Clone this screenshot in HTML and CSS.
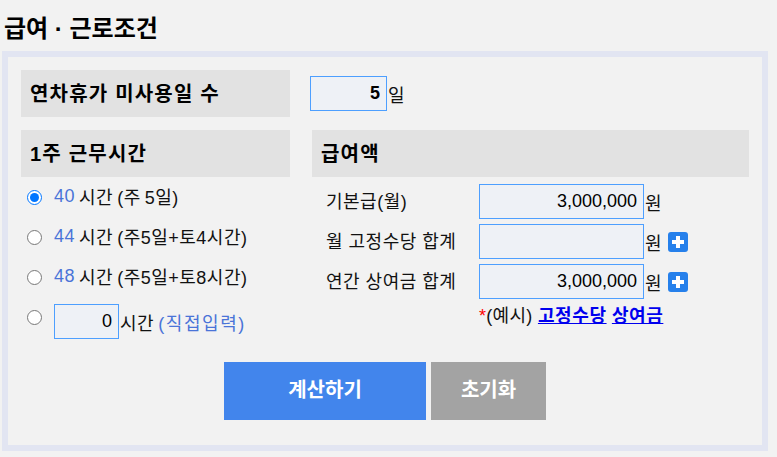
FILE: index.html
```html
<!DOCTYPE html>
<html lang="ko">
  <head>
    <meta charset="UTF-8" />
    <title>급여 · 근로조건</title>
    <link rel="stylesheet" href="styles.css">
  </head>
  <body>
    <h2 class="title">급여 · 근로조건</h2>
    <div class="panel">
      <div class="top-row">
        <div class="head">연차휴가 미사용일 수</div>
        <div class="days">
          <input class="num bold days-input" type="text" value="5" />
          <span class="unit">일</span>
        </div>
      </div>

      <div class="columns">
        <div class="col-left">
          <div class="head">1주 근무시간</div>
          <label class="hours"><input type="radio" name="hours" checked /><span class="label"><span class="blue">40</span> 시간 (주 5일)</span></label>
          <label class="hours"><input type="radio" name="hours" /><span class="label"><span class="blue">44</span> 시간 (주5일+토4시간)</span></label>
          <label class="hours"><input type="radio" name="hours" /><span class="label"><span class="blue">48</span> 시간 (주5일+토8시간)</span></label>
          <label class="hours custom"><input type="radio" name="hours" /><span class="label"><input class="num hours-input" type="text" value="0" /><span class="unit">시간 <span class="blue spaced">(직접입력)</span></span></span></label>
        </div>

        <div class="col-right">
          <div class="head">급여액</div>
          <div class="pay-list">
            <div class="pay-row">
              <span class="pay-name">기본급(월)</span>
              <input class="num pay-input" type="text" value="3,000,000" />
              <span class="unit">원</span>
            </div>
            <div class="pay-row">
              <span class="pay-name">월 고정수당 합계</span>
              <input class="num pay-input" type="text" value="" />
              <span class="unit">원</span>
              <svg class="plus" viewBox="0 0 20 20"><rect width="20" height="20" rx="3" fill="#2680eb" /><path d="M8 4h4v4h4v4h-4v4H8v-4H4V8h4z" fill="#fff" /></svg>
            </div>
            <div class="pay-row">
              <span class="pay-name">연간 상여금 합계</span>
              <input class="num pay-input" type="text" value="3,000,000" />
              <span class="unit">원</span>
              <svg class="plus" viewBox="0 0 20 20"><rect width="20" height="20" rx="3" fill="#2680eb" /><path d="M8 4h4v4h4v4h-4v4H8v-4H4V8h4z" fill="#fff" /></svg>
            </div>
          </div>
          <div class="examples"><span class="star">*</span>(예시) <a href="#">고정수당</a> <a href="#">상여금</a></div>
        </div>
      </div>

      <div class="buttons">
        <button class="btn btn-calc">계산하기</button>
        <button class="btn btn-reset">초기화</button>
      </div>
    </div>
  </body>
</html>
```

FILE: styles.css
```css
* {
  margin: 0;
  padding: 0;
  box-sizing: border-box;
}

body {
  font-family: "Liberation Sans", "Noto Sans CJK KR", sans-serif;
  background: #f2f2f2;
  color: #111;
  font-size: 18px;
  letter-spacing: 0.5px;
  padding: 0 2px;
}

.title {
  height: 51px;
  padding: 13px 0 0 2px;
  font-size: 24px;
  line-height: 32px;
  font-weight: 700;
  letter-spacing: 0;
  color: #000;
}

.panel {
  width: 766px;
  height: 400px;
  border: 6px solid #e2e5f2;
  padding: 13px 13px 0;
}

.head {
  height: 47px;
  line-height: 49px;
  padding-left: 9px;
  background: #e2e2e2;
  font-size: 20px;
  font-weight: 700;
  letter-spacing: 1.2px;
  color: #000;
}

.top-row {
  display: flex;
  margin-bottom: 13px;
}

.top-row .head {
  width: 269px;
}

.days {
  display: flex;
  align-items: center;
  margin-left: 20px;
}

input[type="text"] {
  height: 35px;
  border: 1px solid #4d9fff;
  background: #eef1f6;
  font-family: "Liberation Sans", sans-serif;
  font-size: 18px;
  color: #000;
  text-align: right;
  padding-right: 6px;
}

.days-input {
  width: 77px;
}

input.bold {
  font-weight: 700;
}

.unit {
  margin-left: 1px;
}

.columns {
  display: flex;
  gap: 22px;
}

.col-left {
  width: 269px;
}

.col-right {
  width: 437px;
}

.hours {
  display: flex;
  align-items: center;
  height: 40px;
  padding-left: 6px;
}

.hours input[type="radio"] {
  width: 15px;
  height: 15px;
  margin-right: 12px;
  accent-color: #0075ff;
}

.label {
  display: flex;
  align-items: center;
  white-space: pre;
  word-spacing: -1.5px;
  padding-bottom: 2px;
}

.hours.custom {
  align-items: flex-start;
  height: 35px;
  margin-top: 7px;
}

.hours.custom .label {
  padding-bottom: 0;
}

.hours.custom input[type="radio"] {
  margin-top: 6px;
}

.hours-input {
  width: 65px;
}

.blue {
  color: #4a74d8;
}

.spaced {
  letter-spacing: 1.6px;
}

.pay-list {
  display: flex;
  flex-direction: column;
  gap: 5px;
  margin-top: 7px;
}

.pay-row {
  display: flex;
  align-items: center;
  height: 35px;
}

.pay-name {
  width: 167px;
  padding-left: 14px;
  padding-bottom: 3px;
}

.pay-input {
  width: 165px;
}

.plus {
  width: 20px;
  height: 20px;
  margin-left: 6px;
}

.examples {
  margin: 5px 0 0 167px;
  line-height: 24px;
  letter-spacing: 0.3px;
}

.star {
  color: #f00;
}

.examples a {
  color: #00e;
  font-weight: 700;
  letter-spacing: 0.6px;
}

.buttons {
  display: flex;
  justify-content: center;
  gap: 5px;
  margin-top: 23px;
}

.btn {
  height: 58px;
  padding-bottom: 5px;
  border: none;
  color: #fff;
  font-family: inherit;
  font-size: 20px;
  font-weight: 700;
}

.btn-calc {
  width: 202px;
  background: #4285ec;
}

.btn-reset {
  width: 115px;
  background: #a3a3a3;
}
```
